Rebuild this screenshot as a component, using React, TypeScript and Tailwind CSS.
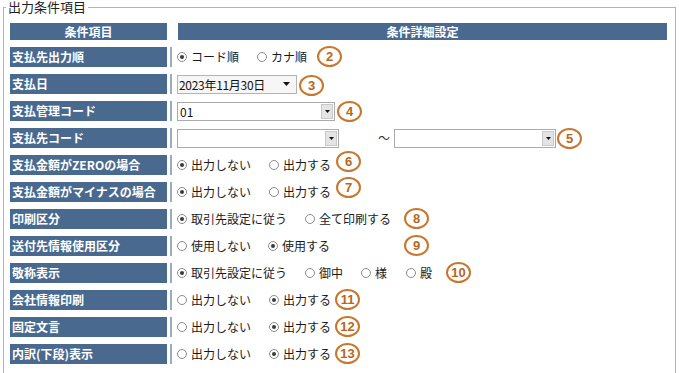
import React from "react";

const Radio = ({ checked, label, w }: { checked?: boolean; label: string; w?: string }) => (
  <span className={`inline-flex items-center shrink-0 ${w ?? ""}`}>
    <span className="w-[10px] h-[10px] rounded-full border border-[#8c8c8c] bg-white flex items-center justify-center shrink-0">
      {checked && <span className="w-[4px] h-[4px] rounded-full bg-[#3a3a3a]" />}
    </span>
    <span className="ml-[4px] text-[12px] leading-[20px] text-[#1a1a1a] whitespace-nowrap">{label}</span>
  </span>
);

const Arrow = ({ size = 5 }: { size?: number }) => (
  <svg width={size * 2 - 1} height={size} viewBox={`0 0 ${size * 2 - 1} ${size}`}>
    <polygon points={`0,0 ${size * 2 - 1},0 ${(size * 2 - 1) / 2},${size}`} fill="#111" />
  </svg>
);

const Select = ({ value, w }: { value?: string; w: string }) => (
  <div className={`flex h-[19px] ${w} border border-[#ababab] bg-white items-stretch`}>
    <div className="flex-1 pl-[2px] text-[12px] leading-[17px] text-[#111] overflow-hidden whitespace-nowrap">{value}</div>
    <div className="w-[12px] my-[1px] mr-[1px] bg-[#e4e4e4] border border-[#c9c9c9] flex items-center justify-center">
      <Arrow size={3} />
    </div>
  </div>
);

const Row = ({ label, children }: { label: string; children?: React.ReactNode }) => (
  <div className="flex h-[20px] items-stretch">
    <div className="w-[157px] shrink-0 bg-[#4a698f] px-[2px] text-[12px] leading-[20px] font-bold text-white whitespace-nowrap overflow-hidden">
      {label}
    </div>
    <div className="ml-[3px] w-[2px] bg-[#9aabc4]" />
    <div className="pl-[5px] flex items-center flex-1">{children}</div>
  </div>
);

const Badge = ({ n, x, y }: { n: string; x: string; y: string }) => (
  <div
    className={`absolute ${x} ${y} w-[25px] h-[21px] rounded-[50%] border-2 border-[#c8772e] flex items-center justify-center text-[13px] font-bold text-[#b8661e] font-['Liberation_Sans',Arial,sans-serif] leading-none`}
  >
    {n}
  </div>
);

export default function App() {
  return (
    <div className="relative w-[679px] h-[373px] overflow-hidden bg-white font-['Noto_Sans_CJK_JP','Noto_Sans',sans-serif]">
      <fieldset className="ml-[3px] w-[673px] border border-[#b4b4b4] pl-[6px] pr-[7px] pb-[20px]">
        <legend className="ml-[-4px] px-[2px] text-[13px] leading-[14px] text-[#222]">出力条件項目</legend>
        <div className="flex flex-col gap-[7px] pt-[9px]">
          <div className="flex gap-[11px] h-[17px]">
            <div className="w-[157px] bg-[#4a698f] text-center text-[12px] leading-[17px] font-bold text-white">条件項目</div>
            <div className="w-[489px] bg-[#4a698f] text-center text-[12px] leading-[17px] font-bold text-white">条件詳細設定</div>
          </div>
          <Row label="支払先出力順">
            <Radio checked label="コード順" w="w-[80px]" />
            <Radio label="カナ順" />
          </Row>
          <Row label="支払日">
            <div className="flex items-center h-[19px] w-[120px] border border-[#b4b4b4] bg-[#f6f6f6]">
              <span className="pl-[1px] text-[12px] leading-[17px] text-[#111] flex-1 whitespace-nowrap tracking-[-0.3px]">2023年11月30日</span>
              <span className="mr-[6px] flex items-center">
                <Arrow size={4} />
              </span>
            </div>
          </Row>
          <Row label="支払管理コード">
            <Select value="01" w="w-[158px]" />
          </Row>
          <Row label="支払先コード">
            <Select w="w-[162px]" />
            <span className="ml-[39px] w-[16px] text-[12px] text-[#333] leading-[20px]">～</span>
            <Select w="w-[162px]" />
          </Row>
          <Row label="支払金額がZEROの場合">
            <Radio checked label="出力しない" w="w-[92px]" />
            <Radio label="出力する" />
          </Row>
          <Row label="支払金額がマイナスの場合">
            <Radio checked label="出力しない" w="w-[92px]" />
            <Radio label="出力する" />
          </Row>
          <Row label="印刷区分">
            <Radio checked label="取引先設定に従う" w="w-[128px]" />
            <Radio label="全て印刷する" />
          </Row>
          <Row label="送付先情報使用区分">
            <Radio label="使用しない" w="w-[91px]" />
            <Radio checked label="使用する" />
          </Row>
          <Row label="敬称表示">
            <Radio checked label="取引先設定に従う" w="w-[128px]" />
            <Radio label="御中" w="w-[56px]" />
            <Radio label="様" w="w-[45px]" />
            <Radio label="殿" />
          </Row>
          <Row label="会社情報印刷">
            <Radio label="出力しない" w="w-[92px]" />
            <Radio checked label="出力する" />
          </Row>
          <Row label="固定文言">
            <Radio label="出力しない" w="w-[92px]" />
            <Radio checked label="出力する" />
          </Row>
          <Row label="内訳(下段)表示">
            <Radio label="出力しない" w="w-[92px]" />
            <Radio checked label="出力する" />
          </Row>
        </div>
      </fieldset>

      <Badge n="2" x="left-[317px]" y="top-[46px]" />
      <Badge n="3" x="left-[299px]" y="top-[75px]" />
      <Badge n="4" x="left-[337px]" y="top-[101px]" />
      <Badge n="5" x="left-[557px]" y="top-[128px]" />
      <Badge n="6" x="left-[336px]" y="top-[151px]" />
      <Badge n="7" x="left-[336px]" y="top-[177px]" />
      <Badge n="8" x="left-[404px]" y="top-[208px]" />
      <Badge n="9" x="left-[404px]" y="top-[235px]" />
      <Badge n="10" x="left-[446px]" y="top-[262px]" />
      <Badge n="11" x="left-[335px]" y="top-[289px]" />
      <Badge n="12" x="left-[335px]" y="top-[316px]" />
      <Badge n="13" x="left-[335px]" y="top-[343px]" />
    </div>
  );
}
